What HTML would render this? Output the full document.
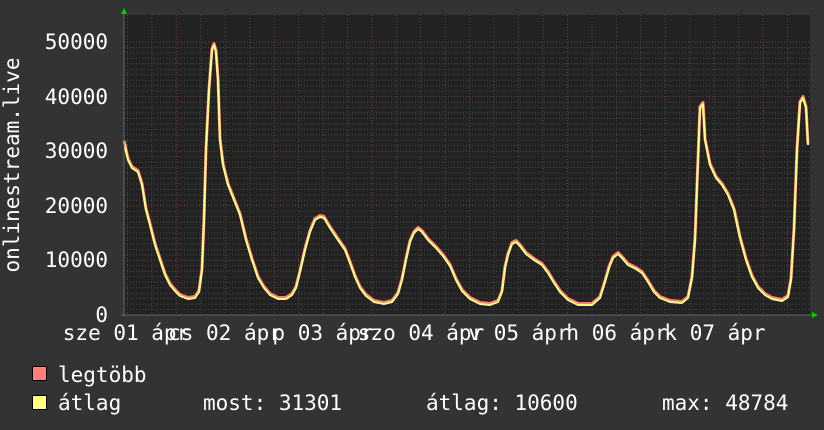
<!DOCTYPE html>
<html><head><meta charset="utf-8"><style>
html,body{margin:0;padding:0;background:#333;}
svg{display:block}
text{font-family:"DejaVu Sans Mono","Liberation Mono",monospace;fill:#fff;font-size:21px}
</style></head><body>
<svg width="824" height="430" viewBox="0 0 824 430" xmlns="http://www.w3.org/2000/svg">
<rect width="824" height="430" fill="#333"/>
<rect x="124" y="15" width="686" height="300" fill="#222"/>
<g id="grid"></g>
<polyline id="mx" fill="none" stroke="#ff7f7f" stroke-width="3" stroke-linejoin="round"/>
<polyline id="av" fill="none" stroke="#ffff80" stroke-width="2" stroke-linejoin="round"/>
<line x1="124" y1="10" x2="124" y2="316" stroke="#666" stroke-width="1"/>
<line x1="121" y1="315" x2="814" y2="315" stroke="#666" stroke-width="1"/>
<polygon points="121,14 127,14 124,8" fill="#0c0"/>
<polygon points="812,312 812,318 818,315" fill="#0c0"/>
<g text-anchor="end">
<text x="108" y="49">50000</text>
<text x="108" y="104">40000</text>
<text x="108" y="158">30000</text>
<text x="108" y="213">20000</text>
<text x="108" y="267">10000</text>
<text x="108" y="322">0</text>
</g>
<text transform="translate(19,165) rotate(-90)" text-anchor="middle">onlinestream.live</text>
<g text-anchor="middle">
<text x="126" y="340">sze 01 ápr</text>
<text x="225" y="340">cs 02 ápr</text>
<text x="323" y="340">p 03 ápr</text>
<text x="421" y="340">szo 04 ápr</text>
<text x="519" y="340">v 05 ápr</text>
<text x="617" y="340">h 06 ápr</text>
<text x="715" y="340">k 07 ápr</text>
</g>
<rect x="32.5" y="366.5" width="14" height="14" fill="#ff7f7f" stroke="#000"/>
<rect x="32.5" y="395.5" width="14" height="14" fill="#ffff80" stroke="#000"/>
<text x="58" y="382">legtöbb</text>
<text x="58" y="410">átlag</text>
<text x="203" y="410">most: 31301</text>
<text x="426" y="410">átlag: 10600</text>
<text x="662" y="410">max: 48784</text>
</svg>
<script>
var g=document.getElementById('grid'),s='',i;
for(i=0;i<=50;i++){var y=315-i*5.46;if(y<15)break;var maj=i%10==0;
s+='<line x1="124" x2="810" y1="'+y.toFixed(1)+'" y2="'+y.toFixed(1)+'" stroke="'+(maj?'#7a3c3c':'#4a4a4a')+'" stroke-dasharray="1,2"/>';}
for(i=-7;i<30;i++){var x=176.3+i*24.45;if(x<125||x>810)continue;var maj=((i%4)+4)%4==0;
s+='<line y1="15" y2="315" x1="'+x.toFixed(1)+'" x2="'+x.toFixed(1)+'" stroke="'+(maj?'#7a3c3c':'#4a4a4a')+'" stroke-dasharray="1,2"/>';}
g.innerHTML=s;
var p="124,142 128,160 132,168 138,172 142,185 146,210 150,225 155,245 160,260 165,275 170,285 175,291 180,296 188,299 195,298 199,292 202,270 204,220 206,150 209,90 212,50 214,45 216,52 218,80 220,140 223,165 228,185 234,200 240,215 246,240 252,260 258,278 264,288 270,295 278,299 286,299 292,295 296,288 300,272 305,250 310,232 315,220 320,217 324,218 330,228 338,240 345,250 350,263 355,277 360,288 366,296 374,302 384,304 392,302 398,294 402,280 406,260 410,242 414,233 418,229 422,232 428,240 436,248 443,256 450,266 456,280 462,291 470,299 480,304 490,305 498,302 502,292 505,268 508,255 512,244 516,242 520,246 526,254 534,260 542,265 548,273 554,283 560,292 568,300 578,305 592,305 600,298 605,282 609,268 613,258 618,254 622,258 628,265 636,269 642,273 648,282 654,292 660,298 670,302 682,303 688,298 692,278 695,240 698,160 700,108 703,104 705,140 710,165 716,178 722,185 728,195 734,210 740,238 746,260 752,277 758,288 765,295 772,299 782,301 788,297 791,280 794,230 797,150 800,103 803,98 806,108 808,145";
document.getElementById('mx').setAttribute('points',p.split(' ').map(function(q){var a=q.split(',');return a[0]+','+(a[1]-1.5)}).join(' '));
document.getElementById('av').setAttribute('points',p);
</script>
</body></html>
